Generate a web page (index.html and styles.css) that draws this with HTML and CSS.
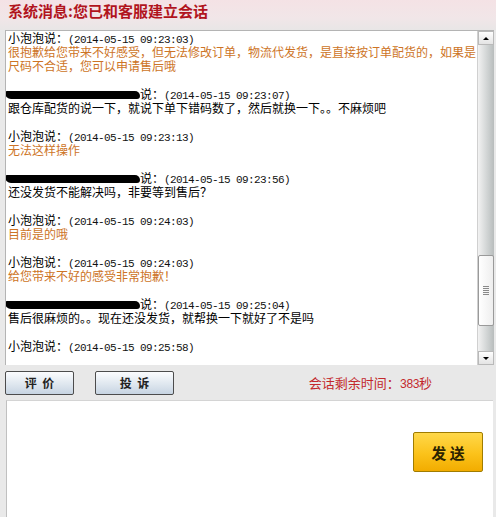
FILE: index.html
```html
<!DOCTYPE html>
<html lang="zh-CN">
<head>
    <meta charset="UTF-8">
    <title>在线客服</title>
    <link rel="stylesheet" href="styles.css">
</head>
<body>
    <div class="header">
        <h1>系统消息:您已和客服建立会话</h1>
    </div>

    <div class="chat">
        <div class="log">
            <div class="msg">
                <p class="meta">小泡泡说：<span class="time">(2014-05-15 09:23:03)</span></p>
                <p class="staff">很抱歉给您带来不好感受，但无法修改订单，物流代发货，是直接按订单配货的，如果是<br>尺码不合适，您可以申请售后哦</p>
            </div>
            <div class="msg">
                <p class="meta"><span class="blot"></span>说：<span class="time">(2014-05-15 09:23:07)</span></p>
                <p>跟仓库配货的说一下，就说下单下错码数了，然后就换一下。。不麻烦吧</p>
            </div>
            <div class="msg">
                <p class="meta">小泡泡说：<span class="time">(2014-05-15 09:23:13)</span></p>
                <p class="staff">无法这样操作</p>
            </div>
            <div class="msg">
                <p class="meta"><span class="blot"></span>说：<span class="time">(2014-05-15 09:23:56)</span></p>
                <p>还没发货不能解决吗，非要等到售后？</p>
            </div>
            <div class="msg">
                <p class="meta">小泡泡说：<span class="time">(2014-05-15 09:24:03)</span></p>
                <p class="staff">目前是的哦</p>
            </div>
            <div class="msg">
                <p class="meta">小泡泡说：<span class="time">(2014-05-15 09:24:03)</span></p>
                <p class="staff">给您带来不好的感受非常抱歉！</p>
            </div>
            <div class="msg">
                <p class="meta"><span class="blot"></span>说：<span class="time">(2014-05-15 09:25:04)</span></p>
                <p>售后很麻烦的。。现在还没发货，就帮换一下就好了不是吗</p>
            </div>
            <div class="msg">
                <p class="meta">小泡泡说：<span class="time">(2014-05-15 09:25:58)</span></p>
            </div>
        </div>
        <div class="scrollbar">
            <div class="arrow up"></div>
            <div class="track">
                <div class="track-fill"></div>
                <div class="thumb"><span class="grip"></span></div>
                <div class="track-end"></div>
            </div>
            <div class="arrow down"></div>
        </div>
    </div>

    <div class="toolbar">
        <button class="btn rate">评&nbsp; 价</button>
        <button class="btn complain">投&nbsp; 诉</button>
        <p class="countdown">会话剩余时间：<span class="secs">383</span>秒</p>
    </div>

    <div class="compose">
        <button class="send">发&nbsp;送</button>
    </div>
</body>
</html>
```

FILE: styles.css
```css
body {
    margin: 0;
    background-color: #e9e9e9;
    font-family: "Noto Sans CJK SC", "Liberation Sans", sans-serif;
    font-size: 12px;
    color: #000;
    width: 496px;
    height: 517px;
    overflow: hidden;
}
.header {
    height: 30px;
    background: linear-gradient(#f4e2e5, #f1e6e8 60%, #e8e6e6);
    padding-left: 8px;
}
.header h1 {
    margin: 0;
    font-size: 15px;
    line-height: 22px;
    color: #b1141d;
    font-weight: bold;
}
.chat {
    display: flex;
    height: 334px;
    margin-left: 5px;
    margin-right: 2px;
    border-left: 1px solid #b4b4b4;
    border-top: 1px solid #b4b4b4;
}
.log {
    flex: 1;
    background-color: #fff;
    padding: 0 2px;
    overflow: hidden;
}
.msg {
    margin-bottom: 14px;
}
.msg p {
    margin: 0;
    line-height: 14px;
    white-space: nowrap;
}
.msg .meta {
    height: 14px;
}
.time {
    font-family: "Liberation Mono", monospace;
    font-size: 11px;
    line-height: 11px;
    letter-spacing: -0.6px;
    color: #111;
}
.staff {
    color: #cd7426;
}
.blot {
    display: inline-block;
    width: 135px;
    height: 8px;
    margin-left: -3px;
    background-color: #000;
    border-radius: 2px 5px 3px 6px;
    vertical-align: 0;
}
.scrollbar {
    width: 16px;
    display: flex;
    flex-direction: column;
    border-left: 1px solid #d0d0d0;
    background-color: #eee;
}
.arrow {
    height: 14px;
    background: linear-gradient(#fefefe, #e4e4e4);
    border: 1px solid #b9b9b9;
    box-sizing: border-box;
    display: flex;
    align-items: center;
    justify-content: center;
}
.arrow::after {
    content: "";
    border-left: 3px solid transparent;
    border-right: 3px solid transparent;
}
.up::after {
    border-bottom: 3px solid #000;
}
.down::after {
    border-top: 3px solid #000;
}
.track {
    flex: 1;
    display: flex;
    flex-direction: column;
    background: linear-gradient(to right, #f2f2f2, #c9cdcd 70%, #b8bcbc);
}
.track-fill {
    flex: 1;
}
.thumb {
    height: 71px;
    background: linear-gradient(to right, #ffffff, #eeeeee);
    border: 1px solid #9a9a9a;
    border-radius: 2px;
    box-sizing: border-box;
    display: flex;
    align-items: center;
    justify-content: center;
}
.grip {
    width: 6px;
    height: 9px;
    background: repeating-linear-gradient(#8a8a8a 0 1px, transparent 1px 2px);
}
.track-end {
    height: 25px;
}
.toolbar {
    height: 35px;
    display: flex;
    align-items: center;
    padding-left: 5px;
    padding-right: 64px;
    gap: 21px;
    background-color: #e8e8e8;
}
.btn {
    height: 24px;
    margin: 0;
    padding: 0;
    border: 1px solid #4c4c4c;
    border-radius: 2px;
    background: linear-gradient(#fbfcfe, #dfe7ef 55%, #c7d4e2);
    font-family: "Noto Sans CJK SC", sans-serif;
    font-size: 12px;
    font-weight: bold;
    color: #222;
}
.rate {
    width: 69px;
}
.complain {
    width: 79px;
}
.countdown {
    margin: 0 0 0 auto;
    font-size: 13px;
    color: #c3282c;
}
.secs {
    font-family: "Liberation Mono", monospace;
    font-size: 12px;
    letter-spacing: -0.8px;
}
.compose {
    height: 116px;
    margin-left: 6px;
    margin-right: 3px;
    border-top: 1px solid #d4d4d4;
    border-left: 1px solid #c0c0c0;
    background-color: #fff;
    display: flex;
    justify-content: flex-end;
    align-items: flex-start;
    padding-right: 10px;
}
.send {
    margin-top: 31px;
    width: 70px;
    height: 40px;
    border: 1px solid #a07c00;
    border-radius: 2px;
    background: linear-gradient(#ffd84a, #fbc21a 55%, #f2ac00);
    font-family: "Noto Sans CJK SC", sans-serif;
    font-size: 15px;
    font-weight: bold;
    color: #2b2200;
}
```
